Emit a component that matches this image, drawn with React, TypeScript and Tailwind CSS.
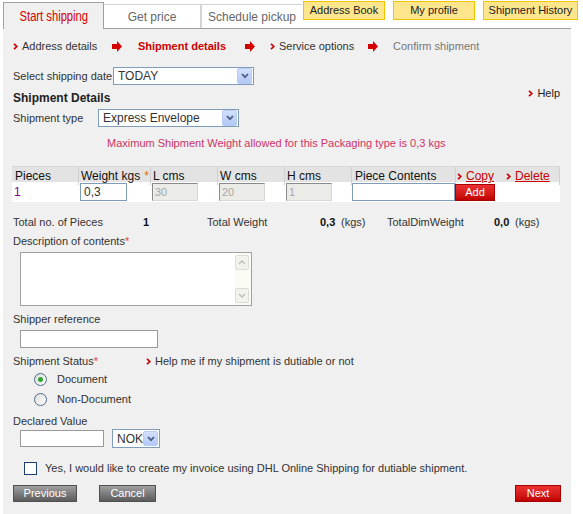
import React from "react";

function Chevron({ className = "" }: { className?: string }) {
  return (
    <svg width="5" height="7" viewBox="0 0 5 7" className={className}>
      <polyline points="1,0.8 3.8,3.5 1,6.2" fill="none" stroke="#cc0000" strokeWidth="1.7" />
    </svg>
  );
}

function BlockArrow() {
  return (
    <svg width="10" height="11" viewBox="0 0 10 11">
      <polygon points="0,3 5,3 5,0 10,5.5 5,11 5,8 0,8" fill="#d40000" />
    </svg>
  );
}

function SelectBtn({ small = false }: { small?: boolean }) {
  return (
    <span
      className={
        "flex items-center justify-center rounded-[2px] border border-[#b9cbf3] bg-gradient-to-b from-[#d3e0fd] to-[#b2c8f7] " +
        (small ? "h-[15px] w-[15px]" : "h-[16px] w-[15px]")
      }
    >
      <svg width="8" height="6" viewBox="0 0 8 6">
        <polyline points="1,1 4,4.2 7,1" fill="none" stroke="#4b5e86" strokeWidth="1.8" />
      </svg>
    </span>
  );
}

function Select({ value, w }: { value: string; w: string }) {
  return (
    <div className={`flex h-[18px] items-center justify-between border border-[#7f9db9] bg-white pl-[4px] pr-[1px] ${w}`}>
      <span className="text-[12px] text-[#333]">{value}</span>
      <SelectBtn />
    </div>
  );
}

function Disabled({ v }: { v: string }) {
  return (
    <div className="flex h-[18px] w-[46px] items-center border border-t-[#8a8a8a] border-l-[#8a8a8a] border-b-[#d8d8d8] border-r-[#d8d8d8] bg-[#ebebe8] pl-[2px] text-[11px] text-[#a8a8a8]">
      {v}
    </div>
  );
}

function Radio({ checked }: { checked?: boolean }) {
  return (
    <span className="flex h-[13px] w-[13px] items-center justify-center rounded-full border border-[#4e6a8c] bg-gradient-to-br from-[#dcdcd6] to-white">
      {checked && <span className="h-[5px] w-[5px] rounded-full bg-[#2fa52f]" />}
    </span>
  );
}

export default function App() {
  return (
    <div className="h-[514px] w-[583px] bg-white font-['Liberation_Sans',Arial,sans-serif] text-[11px] text-[#333]">
      {/* tabs */}
      <div className="ml-[3px] flex h-[29px] w-[568px]">
        <div className="mt-[2px] flex h-[27px] w-[101px] items-center justify-center border-x border-t border-[#a0a0a0] bg-[#f0f0f0]">
          <span className="inline-block origin-center scale-x-[0.8] text-[14px] text-[#d40000]">Start shipping</span>
        </div>
        <div className="flex flex-1 items-start border-b border-[#a0a0a0]">
          <div className="mt-[4px] flex h-[24px] w-[98px] shrink-0 items-center justify-center border-r-2 border-t border-[#d4d4d4] bg-white text-[12px] text-[#666]">
            Get price
          </div>
          <div className="mt-[4px] flex h-[24px] w-[100px] shrink-0 items-center justify-center border-t border-[#d4d4d4] bg-white text-[12px] text-[#666]">
            Schedule pickup
          </div>
          <div className="ml-[1px] mt-[1px] flex h-[19px] w-[82px] shrink-0 items-center justify-center border border-[#f5c400] bg-[#ffe68c] text-[11px] text-[#222]">
            Address Book
          </div>
          <div className="ml-[8px] mt-[1px] flex h-[19px] w-[82px] shrink-0 items-center justify-center border border-[#f5c400] bg-[#ffe68c] text-[11px] text-[#222]">
            My profile
          </div>
          <div className="-mr-[7px] ml-[8px] mt-[1px] flex h-[19px] w-[95px] shrink-0 items-center justify-center border border-[#f5c400] bg-[#ffe68c] text-[11px] text-[#222]">
            Shipment History
          </div>
        </div>
      </div>

      {/* panel */}
      <div className="ml-[3px] h-[485px] w-[568px] bg-[#f0f0f0] pl-[10px]">
        {/* breadcrumb */}
        <div className="flex h-[35px] items-center">
          <span className="flex w-[99px] items-center gap-[4px]">
            <Chevron />
            Address details
          </span>
          <span className="w-[26px]">
            <BlockArrow />
          </span>
          <span className="w-[107px] font-bold text-[#cc0000]">Shipment details</span>
          <span className="w-[25px]">
            <BlockArrow />
          </span>
          <span className="flex w-[98px] items-center gap-[4px]">
            <Chevron />
            Service options
          </span>
          <span className="w-[25px]">
            <BlockArrow />
          </span>
          <span className="text-[#777]">Confirm shipment</span>
        </div>

        {/* date */}
        <div className="mt-[3px] flex h-[18px] items-center">
          <span className="w-[100px]">Select shipping date</span>
          <Select value="TODAY" w="w-[141px]" />
        </div>

        {/* details heading */}
        <div className="flex h-[22px] items-center justify-between pr-[11px]">
          <span className="mt-[3px] text-[12px] font-bold text-[#222]">Shipment Details</span>
          <span className="mt-[1px] flex h-[14px] items-center gap-[4px] self-start text-[#222]">
            <Chevron />
            Help
          </span>
        </div>

        <div className="mt-[2px] flex h-[18px] items-center">
          <span className="w-[85px]">Shipment type</span>
          <Select value="Express Envelope" w="w-[141px]" />
        </div>

        <div className="mt-[8px] flex h-[16px] items-center pl-[94px] text-[#cc3366]">
          Maximum Shipment Weight allowed for this Packaging type is 0,3 kgs
        </div>

        {/* pieces table */}
        <div className="-ml-[1px] mt-[15px] w-[548px]">
          <div className="grid h-[16px] grid-cols-[66px_72px_67px_67px_67px_104px_105px] border-t border-[#d6d6d6] bg-[#e3e3e3] text-[12px] text-[#111]">
            <span className="flex items-center pl-[3px]">Pieces</span>
            <span className="flex items-center border-l border-[#d0d0d0] pl-[2px]">
              Weight kgs <span className="ml-[4px] text-[#e07000]">*</span>
            </span>
            <span className="flex items-center border-l border-[#d0d0d0] pl-[2px]">L cms</span>
            <span className="flex items-center border-l border-[#d0d0d0] pl-[2px]">W cms</span>
            <span className="flex items-center border-l border-[#d0d0d0] pl-[2px]">H cms</span>
            <span className="flex items-center border-l border-[#d0d0d0] pl-[3px]">Piece Contents</span>
            <span className="flex items-center border-x border-[#d0d0d0] pl-[1px]">
              <Chevron />
              <span className="ml-[4px] text-[#cc0000] underline">Copy</span>
              <span className="ml-[12px]">
                <Chevron />
              </span>
              <span className="ml-[4px] text-[#cc0000] underline">Delete</span>
            </span>
          </div>
          <div className="grid h-[20px] grid-cols-[66px_72px_67px_67px_67px_104px_105px] items-center bg-white">
            <span className="pl-[2px] text-[12px] text-[#800080]">1</span>
            <span className="pl-[2px]">
              <div className="flex h-[18px] w-[47px] items-center border border-[#7f9db9] bg-white pl-[3px] text-[12px]">0,3</div>
            </span>
            <span className="pl-[2px]">
              <Disabled v="30" />
            </span>
            <span className="pl-[2px]">
              <Disabled v="20" />
            </span>
            <span className="pl-[2px]">
              <Disabled v="1" />
            </span>
            <span className="pl-[1px]">
              <div className="h-[18px] w-[103px] border border-[#7f9db9] bg-white" />
            </span>
            <span>
              <div className="flex h-[17px] w-[40px] items-center justify-center border border-[#a80000] bg-gradient-to-b from-[#ec3030] to-[#c00000] text-[11px] text-white">
                Add
              </div>
            </span>
          </div>
        </div>

        {/* totals */}
        <div className="mt-[12px] flex h-[16px] items-center">
          <span className="w-[130px]">Total no. of Pieces</span>
          <span className="w-[64px] font-bold text-[#111]">1</span>
          <span className="w-[113px]">Total Weight</span>
          <span className="w-[21px] font-bold text-[#111]">0,3</span>
          <span className="w-[46px]">(kgs)</span>
          <span className="w-[107px]">TotalDimWeight</span>
          <span className="w-[21px] font-bold text-[#111]">0,0</span>
          <span>(kgs)</span>
        </div>

        <div className="mt-[3px] flex h-[16px] items-center">
          Description of contents<span className="text-[#e04040]">*</span>
        </div>
        <div className="ml-[7px] mt-[3px] flex h-[54px] w-[232px] border border-[#a0a0a0] bg-white">
          <div className="flex-1" />
          <div className="flex w-[16px] flex-col justify-between bg-[#fbfbf6] py-[2px]">
            <span className="flex h-[15px] w-[14px] items-center justify-center rounded-[2px] border border-[#dcdcd6] bg-[#f2f2ee]">
              <svg width="8" height="5" viewBox="0 0 8 5">
                <polyline points="1,4 4,1 7,4" fill="none" stroke="#c0c0bc" strokeWidth="1.5" />
              </svg>
            </span>
            <span className="flex h-[15px] w-[14px] items-center justify-center rounded-[2px] border border-[#dcdcd6] bg-[#f2f2ee]">
              <svg width="8" height="5" viewBox="0 0 8 5">
                <polyline points="1,1 4,4 7,1" fill="none" stroke="#c0c0bc" strokeWidth="1.5" />
              </svg>
            </span>
          </div>
        </div>

        <div className="mt-[5px] flex h-[16px] items-center">Shipper reference</div>
        <div className="ml-[7px] mt-[3px] h-[18px] w-[138px] border border-[#999] bg-white" />

        <div className="mt-[5px] flex h-[16px] items-center">
          <span className="w-[133px]">
            Shipment Status<span className="text-[#e04040]">*</span>
          </span>
          <Chevron />
          <span className="ml-[4px]">Help me if my shipment is dutiable or not</span>
        </div>

        <div className="ml-[21px] flex h-[20px] items-center gap-[10px]">
          <Radio checked />
          <span>Document</span>
        </div>
        <div className="ml-[21px] flex h-[20px] items-center gap-[10px]">
          <Radio />
          <span>Non-Document</span>
        </div>

        <div className="mt-[4px] flex h-[16px] items-center">Declared Value</div>
        <div className="ml-[7px] flex h-[19px] items-center">
          <div className="h-[17px] w-[84px] border border-[#999] bg-white" />
          <div className="ml-[8px] flex h-[19px] w-[48px] items-center justify-between border border-[#7f9db9] bg-white pl-[4px] pr-[1px]">
            <span className="text-[12px]">NOK</span>
            <SelectBtn small />
          </div>
        </div>

        <div className="ml-[11px] mt-[10px] flex h-[20px] items-center gap-[8px]">
          <span className="h-[13px] w-[13px] border border-[#1c3f6e] bg-white" />
          <span>Yes, I would like to create my invoice using DHL Online Shipping for dutiable shipment.</span>
        </div>

        <div className="mt-[7px] flex h-[17px] items-center pr-[10px]">
          <div className="flex h-[17px] w-[64px] items-center justify-center border border-[#505050] bg-gradient-to-b from-[#a0a0a0] to-[#5c5c5c] text-white">
            Previous
          </div>
          <div className="ml-[22px] flex h-[17px] w-[57px] items-center justify-center border border-[#505050] bg-gradient-to-b from-[#a0a0a0] to-[#5c5c5c] text-white">
            Cancel
          </div>
          <div className="ml-auto flex h-[17px] w-[46px] items-center justify-center border border-[#a80000] bg-gradient-to-b from-[#ec3030] to-[#c00000] text-white">
            Next
          </div>
        </div>
      </div>
    </div>
  );
}
